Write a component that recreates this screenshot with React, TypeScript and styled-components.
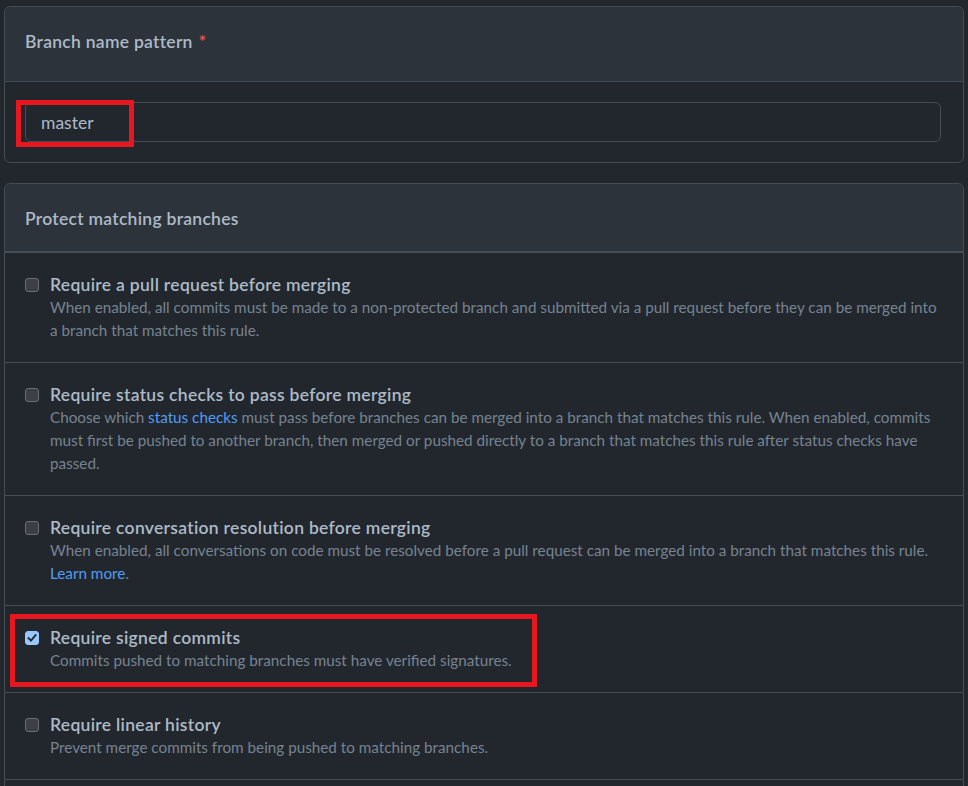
import React from "react";
import styled, { createGlobalStyle } from "styled-components";

const GlobalStyle = createGlobalStyle`
  html, body {
    margin: 0;
    padding: 0;
    background: #22272e;
  }
  body {
    font-family: Lato, "Noto Sans", "Liberation Sans", sans-serif;
    color: #adbac7;
    -webkit-font-smoothing: antialiased;
  }
  * { box-sizing: border-box; }
`;

const Page = styled.div`
  display: flex;
  flex-direction: column;
  gap: 20px;
  padding: 6px 4px 0;
  height: 786px;
  overflow: hidden;
`;

const Box = styled.section`
  border: 1px solid #444c56;
  border-radius: 6px;
  background: #22272e;
  flex-shrink: 0;
`;

const BoxHeader = styled.div<{ $bottom: number }>`
  background: #2d333b;
  border-bottom: 1px solid #444c56;
  border-radius: 6px 6px 0 0;
  padding: 22px 20px ${(p) => p.$bottom}px;
  font-size: 17.5px;
  line-height: 26px;
  font-weight: 600;
  letter-spacing: 0.28px;
  color: #adbac7;
`;

const Required = styled.span`
  color: #e5534b;
  margin-left: 6px;
`;

const BoxBody = styled.div`
  padding: 20px 22px 20px 20px;
`;

const InputWrap = styled.div`
  position: relative;
`;

const TextInput = styled.div`
  height: 40px;
  border: 1px solid #444c56;
  border-radius: 6px;
  background: #22272e;
  padding: 0 15px;
  display: flex;
  align-items: center;
  font-size: 17.5px;
  color: #adbac7;
`;

const Highlight = styled.div<{ $l: number; $t: number; $w: number; $h: number }>`
  position: absolute;
  left: ${(p) => p.$l}px;
  top: ${(p) => p.$t}px;
  width: ${(p) => p.$w}px;
  height: ${(p) => p.$h}px;
  border: 5px solid #e8161f;
  pointer-events: none;
`;

const Row = styled.div`
  position: relative;
  display: flex;
  gap: 11px;
  padding: 21px 20px 20px;
  border-top: 1px solid #444c56;
  &:first-of-type {
    border-top: none;
  }
`;

const CheckBox = styled.span<{ $checked?: boolean }>`
  flex: 0 0 14px;
  width: 14px;
  height: 14px;
  margin-top: 4px;
  border-radius: 3px;
  border: 1px solid ${(p) => (p.$checked ? "#99c8ff" : "#686d74")};
  background: ${(p) => (p.$checked ? "#99c8ff" : "#3c4046")};
  display: flex;
  align-items: center;
  justify-content: center;
`;

const RowText = styled.div`
  flex: 1;
  min-width: 0;
`;

const RowTitle = styled.div`
  font-size: 17.5px;
  line-height: 22px;
  font-weight: 600;
  letter-spacing: 0.3px;
  color: #adbac7;
`;

const RowDesc = styled.p`
  margin: 0;
  font-size: 15.25px;
  line-height: 23px;
  color: #768390;
`;

const Link = styled.a`
  color: #539bf5;
  text-decoration: none;
`;

type RuleProps = {
  title: string;
  checked?: boolean;
  children: React.ReactNode;
  highlight?: boolean;
};

function Rule({ title, checked, children, highlight }: RuleProps) {
  return (
    <Row>
      <CheckBox $checked={checked}>
        {checked && (
          <svg width="10" height="10" viewBox="0 0 10 10">
            <path d="M1.6 5.2 L4 7.6 L8.6 2.2" fill="none" stroke="#22272e" strokeWidth="1.9" strokeLinecap="square" />
          </svg>
        )}
      </CheckBox>
      <RowText>
        <RowTitle>{title}</RowTitle>
        <RowDesc>{children}</RowDesc>
      </RowText>
      {highlight && <Highlight $l={5} $t={8} $w={527} $h={73} />}
    </Row>
  );
}

export default function App() {
  return (
    <>
      <GlobalStyle />
      <Page>
        <Box>
          <BoxHeader $bottom={26}>
            Branch name pattern<Required>*</Required>
          </BoxHeader>
          <BoxBody>
            <InputWrap>
              <TextInput>master</TextInput>
              <Highlight $l={-9} $t={-2} $w={118} $h={47} />
            </InputWrap>
          </BoxBody>
        </Box>
        <Box>
          <BoxHeader $bottom={19}>Protect matching branches</BoxHeader>
          <Rule title="Require a pull request before merging">
            When enabled, all commits must be made to a non-protected branch and submitted via a pull request before they can be merged into a branch that matches this rule.
          </Rule>
          <Rule title="Require status checks to pass before merging">
            Choose which <Link href="#">status checks</Link> must pass before branches can be merged into a branch that matches this rule. When enabled, commits must first be pushed to another branch, then merged or pushed directly to a branch that matches this rule after status checks have passed.
          </Rule>
          <Rule title="Require conversation resolution before merging">
            When enabled, all conversations on code must be resolved before a pull request can be merged into a branch that matches this rule. <Link href="#">Learn more</Link>.
          </Rule>
          <Rule title="Require signed commits" checked highlight>
            Commits pushed to matching branches must have verified signatures.
          </Rule>
          <Rule title="Require linear history">
            Prevent merge commits from being pushed to matching branches.
          </Rule>
          <Rule title="Require deployments to succeed before merging">
            Choose which environments must be successfully deployed to before branches can be merged into a branch that matches this rule.
          </Rule>
        </Box>
      </Page>
    </>
  );
}
